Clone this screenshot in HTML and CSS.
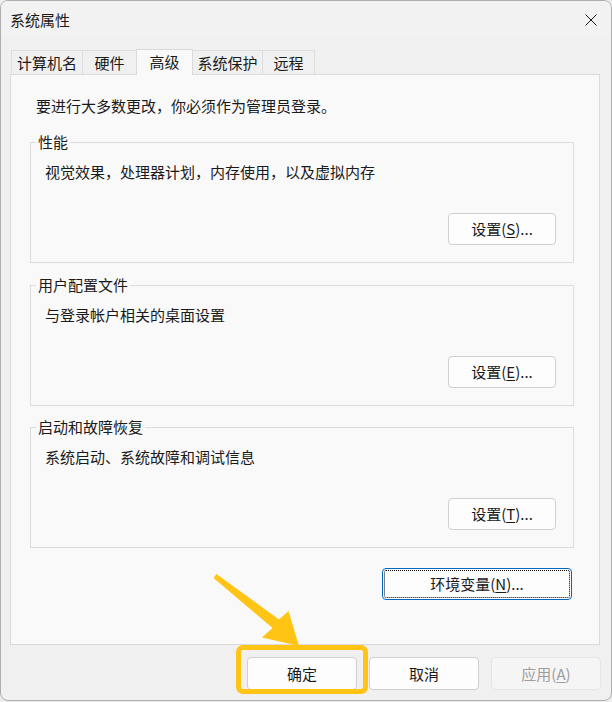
FILE: index.html
```html
<!DOCTYPE html>
<html lang="zh-CN">
<head>
<meta charset="utf-8">
<title>系统属性</title>
<link rel="stylesheet" href="styles.css">
</head>
<body>
<div class="window">
  <div class="titlebar">
    <span class="title">系统属性</span>
    <span class="close" aria-label="关闭">
      <svg width="12" height="12" viewBox="0 0 12 12"><path d="M0.5 0.5 L11.5 11.5 M11.5 0.5 L0.5 11.5" stroke="#1a1a1a" stroke-width="1" fill="none"/></svg>
    </span>
  </div>
  <div class="content">
    <div class="tabs">
      <div class="tab t-name">计算机名</div>
      <div class="tab t-hw">硬件</div>
      <div class="tab t-adv active">高级</div>
      <div class="tab t-prot">系统保护</div>
      <div class="tab t-remote">远程</div>
    </div>
    <div class="panel">
      <p class="intro">要进行大多数更改，你必须作为管理员登录。</p>
      <fieldset class="group">
        <legend>性能</legend>
        <p class="desc">视觉效果，处理器计划，内存使用，以及虚拟内存</p>
        <div class="actions"><button class="btn">设置(<u>S</u>)...</button></div>
      </fieldset>
      <fieldset class="group">
        <legend>用户配置文件</legend>
        <p class="desc">与登录帐户相关的桌面设置</p>
        <div class="actions"><button class="btn">设置(<u>E</u>)...</button></div>
      </fieldset>
      <fieldset class="group last">
        <legend>启动和故障恢复</legend>
        <p class="desc">系统启动、系统故障和调试信息</p>
        <div class="actions"><button class="btn">设置(<u>T</u>)...</button></div>
      </fieldset>
      <div class="env-row"><button class="btn env">环境变量(<u>N</u>)...</button></div>
    </div>
    <div class="footer">
      <button class="btn wide">确定</button>
      <button class="btn wide">取消</button>
      <button class="btn wide disabled">应用(<u>A</u>)</button>
    </div>
  </div>
  <div class="highlight"></div>
  <svg class="arrow" width="612" height="702" viewBox="0 0 612 702">
    <polygon points="216.5,574 279,619.5 288.5,611 299,646 262,637.5 272.5,628 213.5,578" fill="#ffc414"/>
  </svg>
</div>
</body>
</html>
```
FILE: styles.css
```css
* { box-sizing: border-box; }
html, body {
  margin: 0;
  padding: 0;
  background: #ededed;
}
body {
  font-family: "Noto Sans CJK SC", "Noto Sans", sans-serif;
  font-size: 15px;
  line-height: 20px;
  color: #1a1a1a;
}
.window {
  position: relative;
  width: 612px;
  height: 701px;
  border: 1px solid #aeaeae;
  border-radius: 8px;
  background: #f0f0f0;
  overflow: hidden;
}
.titlebar {
  height: 37px;
  display: flex;
  align-items: center;
  justify-content: space-between;
  padding: 0 14px 0 9px;
  background: #f2f2f2;
}
.title { line-height: 20px; }
.close { display: flex; width: 12px; height: 12px; }
.content {
  padding: 0 11px 0 9px;
}
.tabs {
  display: flex;
  align-items: flex-end;
  margin-top: 11px;
  padding-left: 1px;
}
.tab {
  flex: none;
  height: 24px;
  padding: 1px 0 0;
  border: 1px solid #dedede;
  border-bottom: none;
  margin-right: -1px;
  background: #f0f0f0;
  text-align: center;
  line-height: 21px;
}
.t-name { width: 72px; }
.t-hw { width: 55px; }
.t-adv { width: 57px; }
.t-prot { width: 71px; }
.t-remote { width: 53px; }
.tab.active {
  height: 26px;
  margin-bottom: -1px;
  padding: 0 0 2px;
  background: #f9f9f9;
  border-color: #dadada;
  line-height: 23px;
  position: relative;
  z-index: 1;
}
.panel {
  height: 571px;
  background: #f9f9f9;
  border: 1px solid #dadada;
  padding: 21px 25px 0 19px;
  display: flex;
  flex-direction: column;
}
.intro {
  margin: 0 0 16px 6px;
}
.group {
  margin: 0;
  padding: 0 17px 17px 5px;
  border: 1px solid #dcdcdc;
  min-width: 0;
}
.group + .group { margin-top: 12px; }
.group.last { margin-top: 11px; }
.group legend {
  padding: 0 2px;
  line-height: 20px;
}
.desc {
  margin: 10px 0 0 9px;
}
.actions {
  display: flex;
  justify-content: flex-end;
  margin-top: 31px;
}
.btn {
  font-family: inherit;
  font-size: 15px;
  line-height: 20px;
  color: #1a1a1a;
  width: 108px;
  height: 32px;
  padding: 0;
  background: #fdfdfd;
  border: 1px solid #d0d0d0;
  border-radius: 4px;
}
.btn u { text-underline-offset: 2px; }
.env-row {
  display: flex;
  justify-content: flex-end;
  margin-top: 20px;
  padding-right: 2px;
}
.btn.env {
  width: 190px;
  border-color: #0067c0;
  outline: 1px dotted #000;
  outline-offset: -3px;
  background: #fdfdfd;
}
.footer {
  display: flex;
  justify-content: flex-end;
  gap: 12px;
  padding-top: 12px;
  margin-right: -1px;
}
.btn.wide { width: 110px; height: 33px; }
.btn.disabled {
  background: #f5f5f5;
  border-color: #e5e5e5;
  color: #9d9d9d;
}
.highlight {
  position: absolute;
  left: 235px;
  top: 644px;
  width: 132px;
  height: 49px;
  border: 5px solid #ffc414;
  border-radius: 7px;
}
.arrow {
  position: absolute;
  left: -1px;
  top: -1px;
  pointer-events: none;
}
```
